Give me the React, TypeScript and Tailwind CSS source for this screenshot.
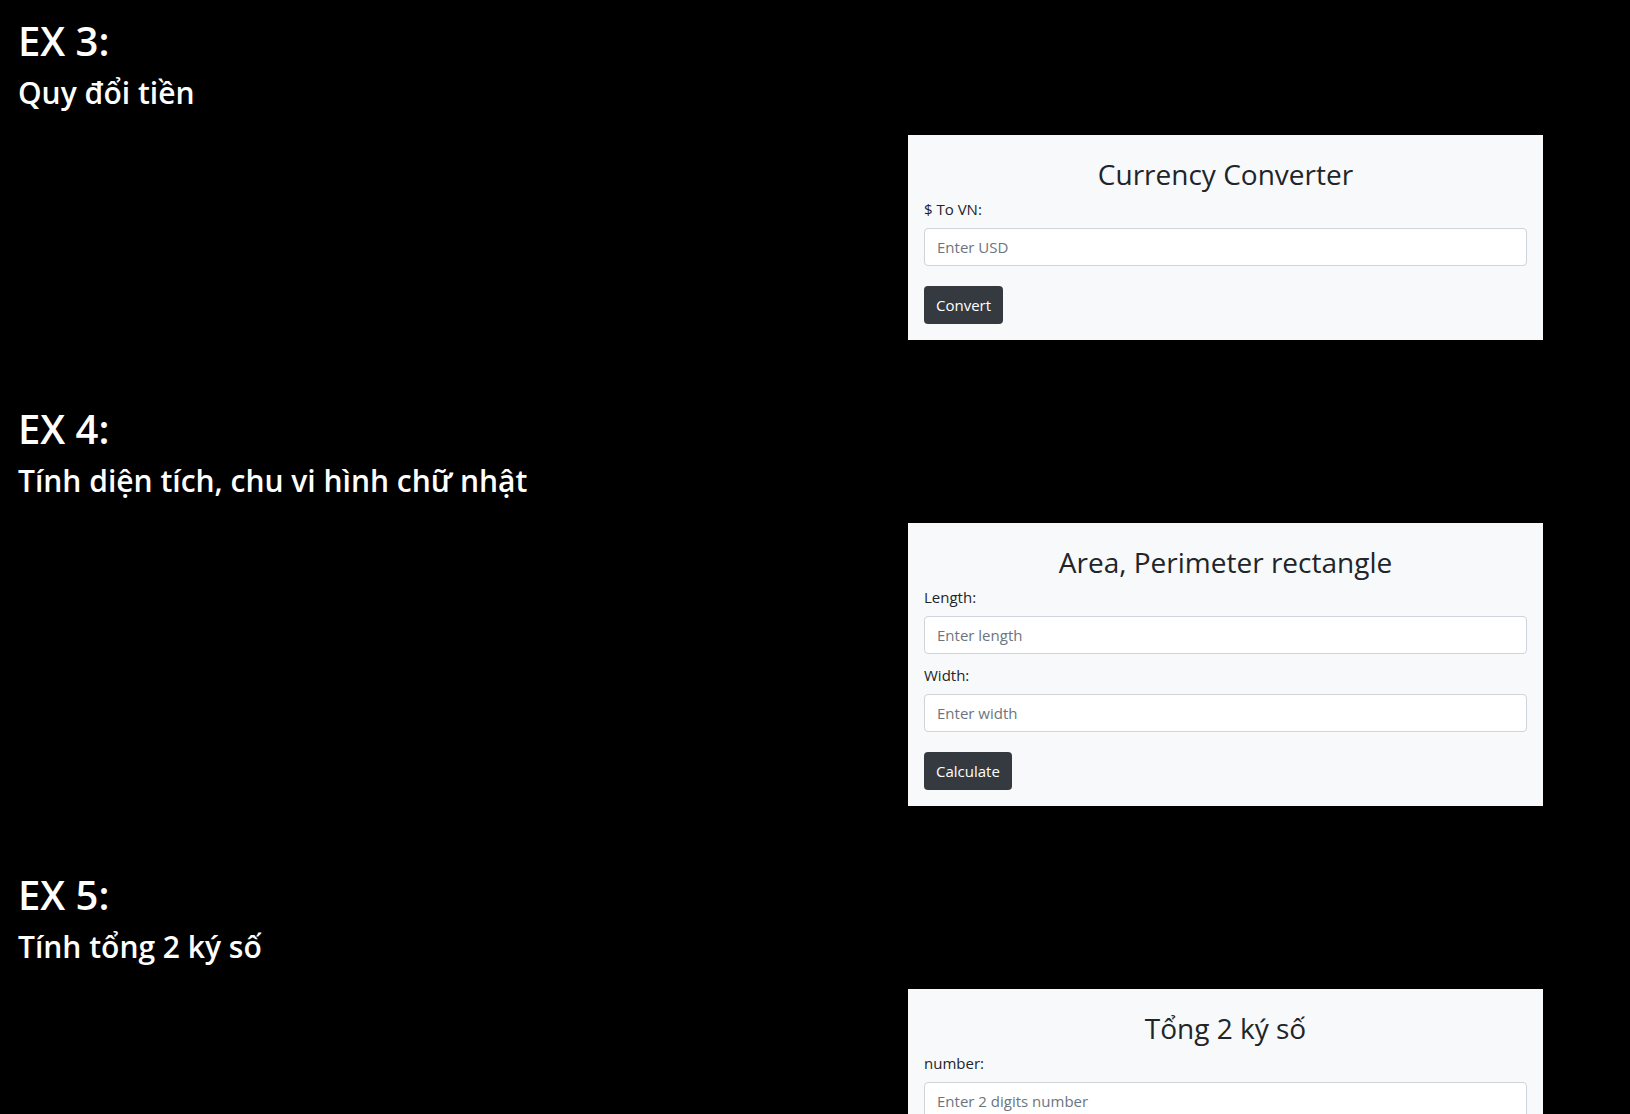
import React from "react";

type Field = { label: string; placeholder: string };

type Exercise = {
  ex: string;
  sub: string;
  title: string;
  fields: Field[];
  button: string;
};

const exercises: Exercise[] = [
  {
    ex: "EX 3:",
    sub: "Quy đổi tiền",
    title: "Currency Converter",
    fields: [{ label: "$ To VN:", placeholder: "Enter USD" }],
    button: "Convert",
  },
  {
    ex: "EX 4:",
    sub: "Tính diện tích, chu vi hình chữ nhật",
    title: "Area, Perimeter rectangle",
    fields: [
      { label: "Length:", placeholder: "Enter length" },
      { label: "Width:", placeholder: "Enter width" },
    ],
    button: "Calculate",
  },
  {
    ex: "EX 5:",
    sub: "Tính tổng 2 ký số",
    title: "Tổng 2 ký số",
    fields: [{ label: "number:", placeholder: "Enter 2 digits number" }],
    button: "Calculate",
  },
];

const FormCard = ({ item }: { item: Exercise }) => (
  <div className="w-[635px] bg-[#f8f9fa] p-4 text-[#212529]">
    <h2 className="pt-[2px] pb-[2px] text-center text-[28px] leading-[42px] font-normal">
      {item.title}
    </h2>
    {item.fields.map((f, i) => (
      <div key={f.label} className={i > 0 ? "mt-[9px]" : ""}>
        <label className="mb-[7px] block text-[15px] leading-6">{f.label}</label>
        <input
          type="text"
          placeholder={f.placeholder}
          className="block h-[38px] w-full rounded border border-[#ced4da] bg-white px-3 text-[15px] text-[#495057] outline-none placeholder:text-[#6c757d]"
        />
      </div>
    ))}
    <button className="mt-5 h-[38px] rounded bg-[#343a40] px-3 text-[15px] text-white">
      {item.button}
    </button>
  </div>
);

export default function App() {
  return (
    <div className="min-h-screen bg-black pt-[17px] font-['Open_Sans','Noto_Sans',sans-serif]">
      <div className="flex flex-col gap-[65px]">
        {exercises.map((item) => (
          <section key={item.ex}>
            <div className="pl-[18px] text-white">
              <h1 className="mb-[10px] text-[40px] leading-[48px] font-semibold">{item.ex}</h1>
              <h3 className="mb-[25px] text-[30px] leading-[35px] font-semibold">{item.sub}</h3>
            </div>
            <div className="flex justify-end pr-[87px]">
              <FormCard item={item} />
            </div>
          </section>
        ))}
      </div>
    </div>
  );
}
